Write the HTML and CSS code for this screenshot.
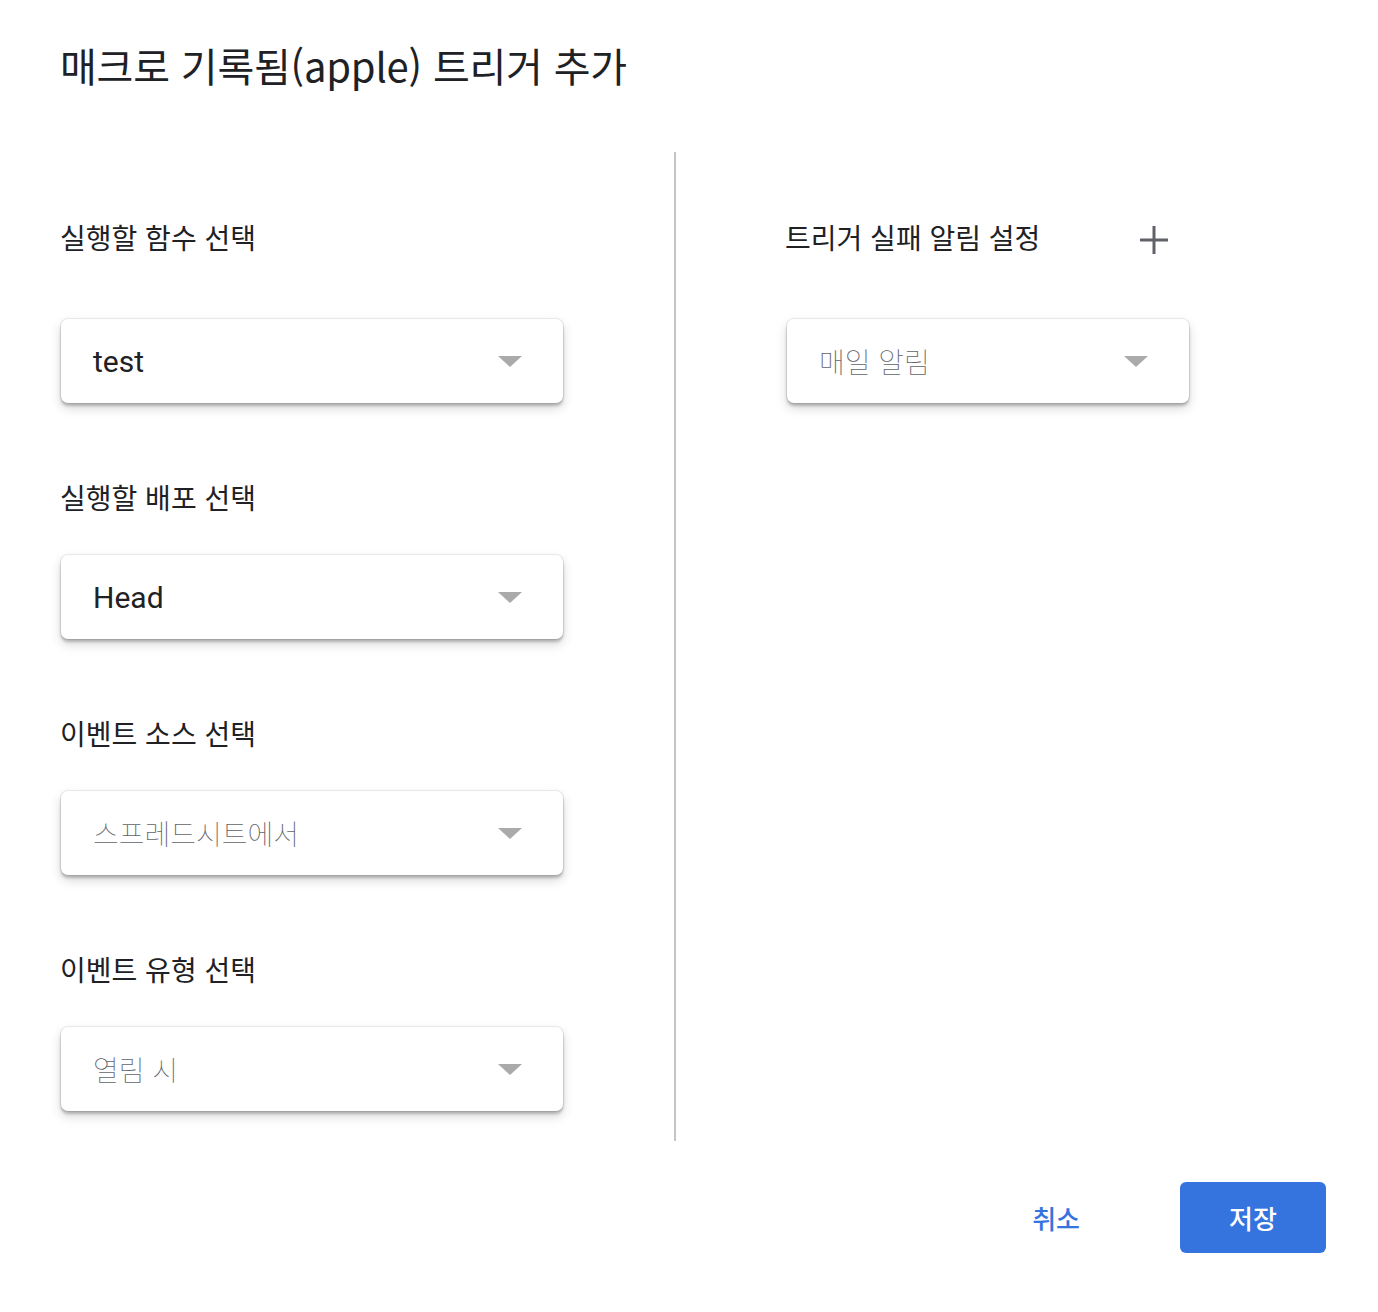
FILE: index.html
```html
<!DOCTYPE html>
<html lang="ko">
<head>
<meta charset="utf-8">
<link rel="stylesheet" href="styles.css">
</head>
<body>
<div class="dialog">
  <h1 class="title">매크로 기록됨(apple) 트리거 추가</h1>
  <div class="main">
    <div class="col-left">
      <div class="label first">실행할 함수 선택</div>
      <div class="select first-box"><span class="val">test</span><span class="arrow"></span></div>
      <div class="label">실행할 배포 선택</div>
      <div class="select"><span class="val">Head</span><span class="arrow"></span></div>
      <div class="label">이벤트 소스 선택</div>
      <div class="select"><span class="val ph">스프레드시트에서</span><span class="arrow"></span></div>
      <div class="label">이벤트 유형 선택</div>
      <div class="select"><span class="val ph">열림 시</span><span class="arrow"></span></div>
    </div>
    <div class="divider"></div>
    <div class="col-right">
      <div class="label first row">
        <span>트리거 실패 알림 설정</span>
        <svg class="plus" width="30" height="30" viewBox="0 0 30 30"><path d="M15 1v28M1 15h28" stroke="#5f6368" stroke-width="3" fill="none"/></svg>
      </div>
      <div class="select narrow first-box"><span class="val ph">매일 알림</span><span class="arrow"></span></div>
    </div>
  </div>
  <div class="actions">
    <button class="btn-text">취소</button>
    <button class="btn-primary">저장</button>
  </div>
</div>
</body>
</html>
```

FILE: styles.css
```css
html, body {
  margin: 0;
  padding: 0;
  background: #fff;
}
body {
  font-family: Roboto, "Noto Sans CJK KR", sans-serif;
  color: #202124;
}
.dialog {
  width: 1378px;
  height: 1312px;
  box-sizing: border-box;
  padding: 38px 52px 0 60px;
}
.title {
  margin: 0;
  font-family: "Noto Sans CJK KR", sans-serif;
  font-size: 40px;
  font-weight: 400;
  line-height: 54px;
  height: 54px;
  letter-spacing: -0.2px;
}
.main {
  display: flex;
  margin-top: 60px;
}
.col-left {
  width: 614px;
  padding: 67px 0 30px 0;
}
.divider {
  width: 2px;
  background: #c4c4c4;
}
.col-right {
  padding: 67px 0 0 109px;
}
.label {
  font-family: "Noto Sans CJK KR", sans-serif;
  font-size: 28px;
  line-height: 36px;
  height: 36px;
  margin-top: 76px;
  color: #202124;
}
.label.first {
  margin-top: 0;
}
.label.row {
  display: flex;
  align-items: center;
  width: 384px;
  justify-content: space-between;
}
.plus {
  margin-top: 6px;
}
.select {
  margin-top: 40px;
  margin-left: 1px;
  width: 502px;
  height: 84px;
  box-sizing: border-box;
  border-radius: 7px;
  background: #fff;
  box-shadow: 0 0 0 1px rgba(0,0,0,0.07), 0 3px 3px rgba(0,0,0,0.22), 0 5px 12px rgba(0,0,0,0.16);
  display: flex;
  align-items: center;
  padding: 0 41px 0 32px;
}
.select.first-box {
  margin-top: 64px;
}
.select.narrow {
  margin-left: 2px;
  width: 402px;
}
.val {
  flex: 1;
  font-size: 30px;
  color: #202124;
  font-family: Roboto, "Noto Sans CJK KR", sans-serif;
}
.val.ph {
  font-family: "Noto Sans CJK KR", sans-serif;
  font-weight: 100;
  color: #5f6368;
  font-size: 28px;
}
.arrow {
  width: 0;
  height: 0;
  border-left: 12px solid transparent;
  border-right: 12px solid transparent;
  border-top: 11px solid #aaaaaa;
}
.actions {
  display: flex;
  justify-content: flex-end;
  align-items: center;
  margin-top: 41px;
}
.btn-text {
  background: none;
  border: none;
  font-family: "Noto Sans CJK KR", sans-serif;
  font-size: 26px;
  font-weight: 500;
  color: #3574e0;
  padding: 0;
  margin-right: 100px;
}
.btn-primary {
  width: 146px;
  height: 71px;
  background: #3574df;
  border: none;
  border-radius: 6px;
  color: #fff;
  font-family: "Noto Sans CJK KR", sans-serif;
  font-size: 26px;
  font-weight: 500;
}
```
